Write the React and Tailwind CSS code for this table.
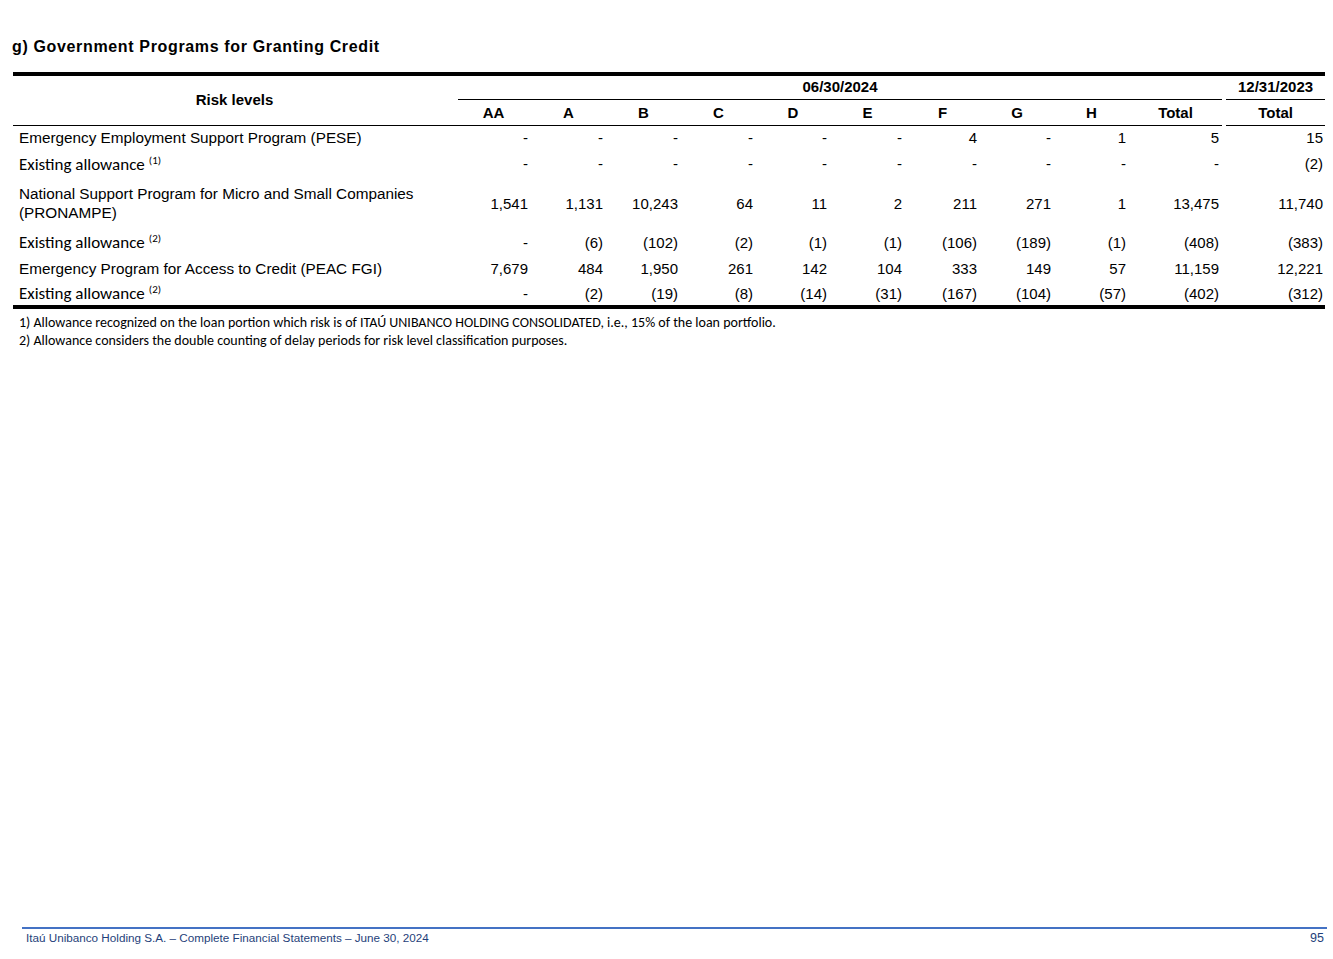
import React from 'react'

const cols = ['AA', 'A', 'B', 'C', 'D', 'E', 'F', 'G', 'H', 'Total']

const rows = [
  { label: 'Emergency Employment Support Program (PESE)', values: ['-', '-', '-', '-', '-', '-', '4', '-', '1', '5', '15'], h: 'h-[25px]' },
  { label: 'Existing allowance', note: '(1)', values: ['-', '-', '-', '-', '-', '-', '-', '-', '-', '-', '(2)'], h: 'h-[27px]', calibri: true },
  { label: 'National Support Program for Micro and Small Companies (PRONAMPE)', values: ['1,541', '1,131', '10,243', '64', '11', '2', '211', '271', '1', '13,475', '11,740'], h: 'h-[52px]' },
  { label: 'Existing allowance', note: '(2)', values: ['-', '(6)', '(102)', '(2)', '(1)', '(1)', '(106)', '(189)', '(1)', '(408)', '(383)'], h: 'h-[26px]', calibri: true },
  { label: 'Emergency Program for Access to Credit (PEAC FGI)', values: ['7,679', '484', '1,950', '261', '142', '104', '333', '149', '57', '11,159', '12,221'], h: 'h-[26px]' },
  { label: 'Existing allowance', note: '(2)', values: ['-', '(2)', '(19)', '(8)', '(14)', '(31)', '(167)', '(104)', '(57)', '(402)', '(312)'], h: 'h-[26px]', calibri: true },
]

export default function App() {
  return (
    <div className="relative w-[1333px] h-[959px] bg-white text-black font-['Liberation_Sans',Arial,sans-serif]">
      <div className="pt-[38px] pl-[12px]">
        <h2 className="text-[16px] leading-[18px] font-bold tracking-[0.65px]">g) Government Programs for Granting Credit</h2>
      </div>

      <div className="mt-[16px] ml-[13px] w-[1312px]">
        <table className="w-full table-fixed border-collapse text-[15px] leading-[19px]">
          <colgroup>
            <col className="w-[443px]" />
            <col className="w-[75px]" />
            <col className="w-[75px]" />
            <col className="w-[75px]" />
            <col className="w-[75px]" />
            <col className="w-[74px]" />
            <col className="w-[75px]" />
            <col className="w-[75px]" />
            <col className="w-[74px]" />
            <col className="w-[75px]" />
            <col className="w-[93px]" />
            <col className="w-[4px]" />
            <col className="w-[99px]" />
          </colgroup>
          <thead>
            <tr className="h-[26px] border-t-[4px] border-black">
              <th rowSpan={2} className="font-bold text-center align-middle pb-[2px] border-b border-black">Risk levels</th>
              <th colSpan={10} className="p-0 align-bottom">
                <div className="border-b border-black pb-[3px] ml-[2px] text-center font-bold">06/30/2024</div>
              </th>
              <th className="p-0" />
              <th className="p-0 align-bottom">
                <div className="border-b border-black pb-[3px] text-center font-bold">12/31/2023</div>
              </th>
            </tr>
            <tr className="h-[25px]">
              {cols.map((c, i) => (
                <th key={i} className="font-bold text-center align-middle border-b border-black p-0">{c}</th>
              ))}
              <th className="p-0" />
              <th className="font-bold text-center align-middle border-b border-black p-0">Total</th>
            </tr>
          </thead>
          <tbody>
            {rows.map((r, ri) => (
              <tr key={ri} className={`${r.h} ${ri === rows.length - 1 ? 'border-b-[4px] border-black' : ''}`}>
                <td className={`pl-[6px] pr-[30px] align-middle text-[15.3px] ${r.calibri ? 'pt-[3px]' : ''}`}>
                  {r.calibri ? (
                    <span className="font-['Carlito','Lato',sans-serif] text-[17px]">
                      {r.label}
                      <span className="relative -top-[6px] ml-[4px] text-[11px]">{r.note}</span>
                    </span>
                  ) : (
                    r.label
                  )}
                </td>
                {r.values.slice(0, 10).map((v, i) => (
                  <td key={i} className="text-right pr-[3px] align-middle p-0">{v}</td>
                ))}
                <td className="p-0" />
                <td className="text-right pr-[2px] align-middle p-0">{r.values[10]}</td>
              </tr>
            ))}
          </tbody>
        </table>

        <div className="mt-[5px] pl-[6px] font-['Carlito','Lato',sans-serif] text-[14px] leading-[18px]">
          <p>1) Allowance recognized on the loan portion which risk is of ITAÚ UNIBANCO HOLDING CONSOLIDATED, i.e., 15% of the loan portfolio.</p>
          <p>2) Allowance considers the double counting of delay periods for risk level classification purposes.</p>
        </div>
      </div>

      <div className="absolute left-[22px] right-[6px] top-[927px] border-t-2 border-[#4472c4] flex justify-between pl-[4px] pr-[3px] pt-[1px] text-[11.7px] leading-[16px] text-[#1f3f7a]">
        <span>Itaú Unibanco Holding S.A. – Complete Financial Statements – June 30, 2024</span>
        <span className="text-[12.5px]">95</span>
      </div>
    </div>
  )
}
